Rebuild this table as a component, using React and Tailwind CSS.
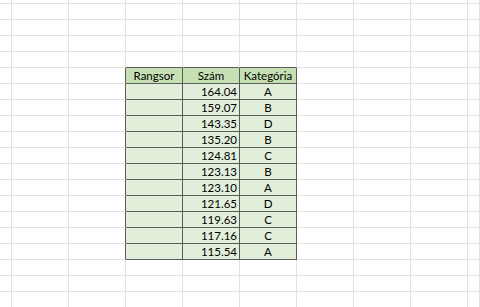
import React from "react";

const rows = [
  ["164.04", "A"],
  ["159.07", "B"],
  ["143.35", "D"],
  ["135.20", "B"],
  ["124.81", "C"],
  ["123.13", "B"],
  ["123.10", "A"],
  ["121.65", "D"],
  ["119.63", "C"],
  ["117.16", "C"],
  ["115.54", "A"],
];

const COLS = 10;
const ROWS = 20;
const TOP = 5; // header row index
const LEFT = 3; // first table column

function Cell({ r, c }) {
  const inTable = r >= TOP && r <= TOP + rows.length && c >= LEFT && c < LEFT + 3;
  const leftOfTable = c === LEFT - 1 && r >= TOP && r <= TOP + rows.length;
  const aboveTable = r === TOP - 1 && c >= LEFT && c < LEFT + 3;

  const width = c === 0 ? "w-[12px]" : c === COLS - 1 ? "flex-1" : "w-[57px]";
  const height = r === 0 ? "h-[4px]" : "h-[16px]";

  let cls = `${width} ${height} shrink-0 border-r border-b `;
  if (inTable) {
    cls += "border-[#5b5b5b] ";
    cls += r === TOP ? "bg-[#c6e0b4] " : "bg-[#e2efda] ";
  } else if (leftOfTable) {
    cls += "border-b-[#e1e1e1] border-r-[#5b5b5b] ";
  } else if (aboveTable) {
    cls += "border-r-[#e1e1e1] border-b-[#5b5b5b] ";
  } else {
    cls += "border-[#e1e1e1] ";
  }

  let text = null;
  let align = "justify-center";
  if (inTable) {
    const k = c - LEFT;
    if (r === TOP) {
      text = ["Rangsor", "Szám", "Kategória"][k];
    } else {
      const row = rows[r - TOP - 1];
      if (k === 1) {
        text = row[0];
        align = "justify-end pr-[2px]";
      } else if (k === 2) {
        text = row[1];
      }
    }
  }

  return (
    <div className={`${cls} flex items-center ${align} text-[11.5px] leading-none text-black`}>
      {text}
    </div>
  );
}

export default function App() {
  return (
    <div
      className="w-[480px] h-[307px] overflow-hidden bg-white"
      style={{ fontFamily: "Lato, 'Liberation Sans', sans-serif" }}
    >
      {Array.from({ length: ROWS }).map((_, r) => (
        <div key={r} className="flex">
          {Array.from({ length: COLS }).map((_, c) => (
            <Cell key={c} r={r} c={c} />
          ))}
        </div>
      ))}
    </div>
  );
}
